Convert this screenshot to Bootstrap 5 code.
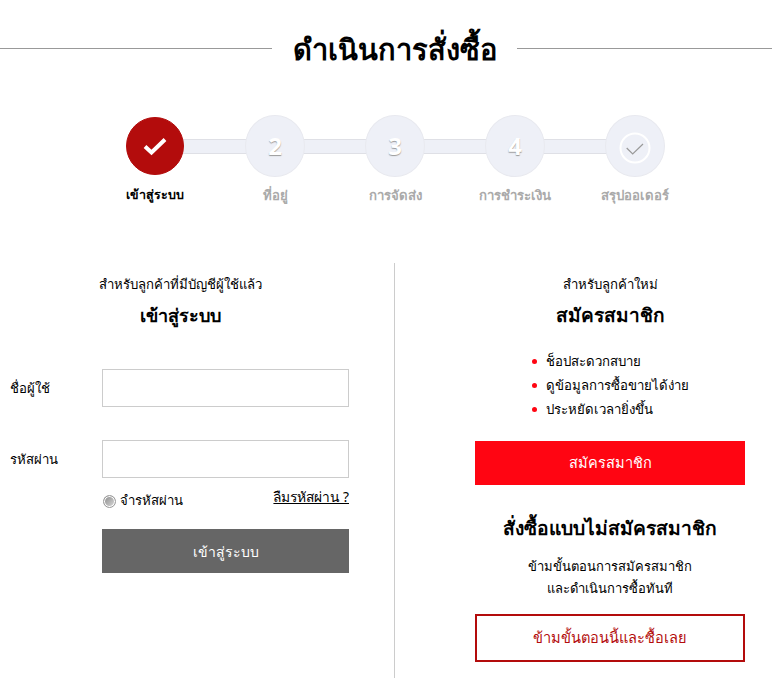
<!DOCTYPE html>
<html lang="th">
<head>
    <meta charset="UTF-8">
    <title>ดำเนินการสั่งซื้อ</title>
    <meta name="viewport" content="width=device-width, initial-scale=1">
    <link href="https://cdn.jsdelivr.net/npm/bootstrap@5.3.2/dist/css/bootstrap.min.css" rel="stylesheet">
    <style>
        body { background: #fff; color: #000; font-family: "Noto Sans", "Noto Sans CJK SC", "Liberation Sans", sans-serif; font-size: 13.2px; height: 678px; overflow: hidden; }
        .page-head { height: 97px; padding-bottom: 1px; }
        .page-head hr { margin: 0; border-top: 1px solid #999; opacity: 1; }
        .page-head .line-left { width: 272px; }
        .page-head .line-right { flex: 1; }
        .page-head h1 { width: 245px; font-size: 29px; font-weight: 700; margin: 0; line-height: 1; text-align: center; white-space: nowrap; }
        .steps { width: 600px; margin-left: 95px; height: 166px; padding-top: 20px; }
        .step-item { width: 120px; position: relative; }
        .step-item + .step-item::before { content: ""; position: absolute; top: 22px; left: -60px; width: 120px; height: 15px; background: #eef0f7; border-top: 1px solid #dfe0e6; border-bottom: 1px solid #dfe0e6; }
        .step-dot { width: 60px; height: 62px; margin-top: -2px; border-radius: 50%; background: #eef0f7; border: 1px solid #e8e9ef; position: relative; z-index: 1; color: #fff; font-size: 24px; font-weight: 700; text-shadow: 0 1px 1px #999; }
        .step-dot.done { background: #b30c0c; border-color: #b30c0c; width: 58px; height: 58px; margin: 0 1px 2px; text-shadow: none; }
        .step-label { margin-top: 8px; color: #aaa; font-weight: 600; font-size: 13.2px; line-height: 20px; white-space: nowrap; }
        .step-item.active .step-label { color: #000; font-size: 12.5px; }
        .left-pane { width: 395px; height: 415px; border-right: 1px solid #ccc; }
        .right-pane { width: 377px; height: 415px; padding-left: 80px; padding-right: 27px; }
        .pane-sub { line-height: 20px; padding-top: 11px; }
        .left-pane .pane-sub, .left-pane .pane-title { width: 360px; }
        .pane-title { font-size: 18px; font-weight: 600; line-height: 26px; margin: 8px 0 0; }
        .right-pane .pane-title { font-size: 19px; }
        .login-form { padding-left: 10px; width: 349px; margin-top: 41px; }
        .field-row { margin-bottom: 33px; }
        .field-row:nth-of-type(2) { margin-bottom: 0; }
        .field-label { width: 92px; margin: 0; padding-top: 9px; line-height: 20px; }
        .field-input { width: 247px; height: 38px; border: 1px solid #ccc; border-radius: 0; }
        .remember-row { margin-left: 92px; height: 51px; padding-top: 9px; line-height: 20px; }
        .remember-text { margin-top: 3px; }
        .fake-radio { width: 13px; height: 13px; margin: 2px 0 0 1px; border-radius: 50%; border: 1px solid #999; background: linear-gradient(135deg, #888, #ddd); box-shadow: inset 0 0 0 1px #fff; display: inline-block; }
        .forgot { color: #000; text-decoration: underline; font-size: 13.8px; }
        .btn-flat { display: block; width: 100%; border-radius: 0; border: 0; color: #fff; font-size: 14.6px; font-weight: 500; height: 44px; }
        .btn-grey { background: #666; width: 247px; margin-left: 92px; font-size: 14px; }
        .btn-red { background: #ff0512; margin-top: 20px; }
        .btn-outline-flat { background: #fff; border: 2px solid #b30c0c; color: #b30c0c; height: 48px; }
        .perks { width: 170px; margin: 21px 0 0 71px; padding-left: 0; list-style: none; line-height: 24px; }
        .perks li { white-space: nowrap; position: relative; }
        .perks li::before { content: ""; position: absolute; left: -14px; top: 10px; width: 5px; height: 5px; border-radius: 50%; background: #ff0512; }
        .guest-title { font-size: 19.2px; font-weight: 600; line-height: 26px; margin: 30px 0 0; }
        .guest-text { font-size: 13px; line-height: 22px; margin: 14px 0 15px; }
    </style>
</head>
<body>
    <div class="page-head d-flex align-items-center">
        <hr class="line-left">
        <h1>ดำเนินการสั่งซื้อ</h1>
        <hr class="line-right">
    </div>

    <div class="steps d-flex">
        <div class="step-item active d-flex flex-column align-items-center">
            <div class="step-dot done d-flex align-items-center justify-content-center">
                <svg width="24" height="20" viewBox="0 0 24 20"><path d="M2 10.5l6.5 6L22 3.5" fill="none" stroke="#fff" stroke-width="4"/></svg>
            </div>
            <div class="step-label">เข้าสู่ระบบ</div>
        </div>
        <div class="step-item d-flex flex-column align-items-center">
            <div class="step-dot d-flex align-items-center justify-content-center">2</div>
            <div class="step-label">ที่อยู่</div>
        </div>
        <div class="step-item d-flex flex-column align-items-center">
            <div class="step-dot d-flex align-items-center justify-content-center">3</div>
            <div class="step-label">การจัดส่ง</div>
        </div>
        <div class="step-item d-flex flex-column align-items-center">
            <div class="step-dot d-flex align-items-center justify-content-center">4</div>
            <div class="step-label">การชำระเงิน</div>
        </div>
        <div class="step-item d-flex flex-column align-items-center">
            <div class="step-dot d-flex align-items-center justify-content-center">
                <svg width="32" height="36" viewBox="0 0 32 36"><circle cx="16" cy="20" r="14.5" fill="none" stroke="#fff" stroke-width="2"/><path d="M7.7 20l6 6L24 16" fill="none" stroke="#999" stroke-width="1.2"/></svg>
            </div>
            <div class="step-label">สรุปออเดอร์</div>
        </div>
    </div>

    <div class="d-flex">
        <div class="left-pane">
            <div class="text-center pane-sub">สำหรับลูกค้าที่มีบัญชีผู้ใช้แล้ว</div>
            <h2 class="text-center pane-title">เข้าสู่ระบบ</h2>
            <form class="login-form">
                <div class="d-flex field-row">
                    <label class="field-label" for="user">ชื่อผู้ใช้</label>
                    <input class="field-input" id="user" type="text">
                </div>
                <div class="d-flex field-row">
                    <label class="field-label" for="pass">รหัสผ่าน</label>
                    <input class="field-input" id="pass" type="password">
                </div>
                <div class="remember-row d-flex justify-content-between align-items-start">
                    <span class="remember-text d-flex align-items-center gap-1"><span class="fake-radio"></span>จำรหัสผ่าน</span>
                    <a class="forgot" href="#">ลืมรหัสผ่าน ?</a>
                </div>
                <button type="button" class="btn-flat btn-grey">เข้าสู่ระบบ</button>
            </form>
        </div>
        <div class="right-pane text-center">
            <div class="pane-sub">สำหรับลูกค้าใหม่</div>
            <h2 class="pane-title">สมัครสมาชิก</h2>
            <ul class="perks text-start">
                <li>ช็อปสะดวกสบาย</li>
                <li>ดูข้อมูลการซื้อขายได้ง่าย</li>
                <li>ประหยัดเวลายิ่งขึ้น</li>
            </ul>
            <button type="button" class="btn-flat btn-red">สมัครสมาชิก</button>
            <h3 class="guest-title">สั่งซื้อแบบไม่สมัครสมาชิก</h3>
            <p class="guest-text">ข้ามขั้นตอนการสมัครสมาชิก<br>และดำเนินการซื้อทันที</p>
            <button type="button" class="btn-flat btn-outline-flat">ข้ามขั้นตอนนี้และซื้อเลย</button>
        </div>
    </div>
</body>
</html>
